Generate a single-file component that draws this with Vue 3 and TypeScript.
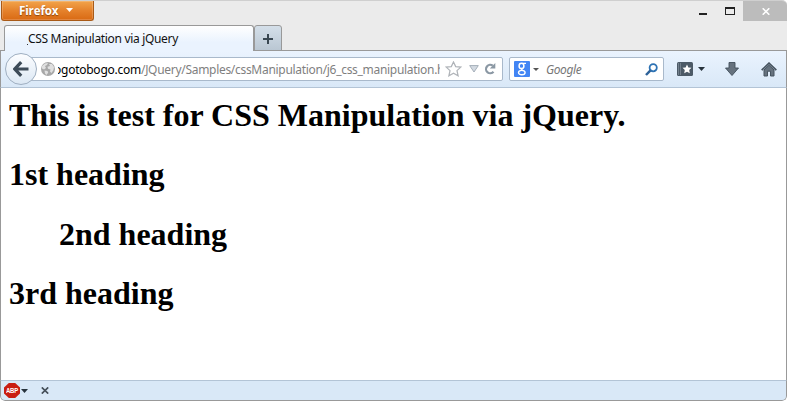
<script setup lang="ts">
interface Heading {
  text: string
  indented?: boolean
}

const headings: Heading[] = [
  { text: 'This is test for CSS Manipulation via jQuery.' },
  { text: '1st heading' },
  { text: '2nd heading', indented: true },
  { text: '3rd heading' },
]
</script>

<template>
  <div class="window">
    <header class="titlebar">
      <button class="app-button">
        <span>Firefox</span>
        <svg width="7" height="4" viewBox="0 0 7 4"><path d="M0 0H7L3.5 4Z" fill="#fff" /></svg>
      </button>
      <div class="controls">
        <svg class="minimize" width="8" height="3"><rect width="8" height="2" fill="#222" /></svg>
        <svg class="maximize" width="10" height="8" viewBox="0 0 10 8">
          <path d="M0 0H10V8H0ZM1 2V7H9V2Z" fill="#222" fill-rule="evenodd" />
        </svg>
        <div class="close">
          <svg width="8" height="7" viewBox="0 0 8 7"><path d="M.7 .3L7.3 6.7M7.3 .3L.7 6.7" stroke="#fff" stroke-width="1.6" /></svg>
        </div>
      </div>
    </header>

    <div class="tabs">
      <div class="tab"><i class="speck"></i><span class="tab-title">CSS Manipulation via jQuery</span></div>
      <div class="new-tab">
        <svg width="10" height="10" viewBox="0 0 10 10"><path d="M4 0H6V4H10V6H6V10H4V6H0V4H4Z" fill="#394751" /></svg>
      </div>
    </div>

    <nav class="toolbar">
      <div class="back">
        <svg width="17" height="16" viewBox="0 0 17 16">
          <path d="M8.2 1.2L1.8 8L8.2 14.8M2.2 8H15.5" fill="none" stroke="#3d4b58" stroke-width="3.2" />
        </svg>
      </div>
      <div class="address">
        <svg class="globe" width="14" height="14" viewBox="0 0 14 14">
          <circle cx="7" cy="7" r="7" fill="#a8a8a8" />
          <path d="M1 4L4 1.5L7 1L6 3L4 4L5 6L3 7.5L1 6.5ZM8 2L11 2L13 5L12.5 8L10.5 11L9 9.5L9.5 7.5L7 6.8L6.5 4.7L9 4ZM3.5 8.5L6.5 9L7.2 10.5L5.5 13L4 11.5Z" fill="#e0e0e0" />
        </svg>
        <div class="url">
          <span class="domain">ogotobogo.com</span><span class="path">/JQuery/Samples/cssManipulation/j6_css_manipulation.html</span>
        </div>
        <svg class="star" width="17" height="16" viewBox="0 0 17 16">
          <path d="M8.5 1L10.7 5.6L15.8 6.1L12 9.6L13.1 14.8L8.5 12.2L3.9 14.8L5 9.6L1.2 6.1L6.3 5.6Z" fill="#fff" stroke="#b0b4b9" stroke-width="1.25" />
        </svg>
        <svg class="dropmarker" width="10" height="8" viewBox="0 0 10 8"><path d="M.7 .6H9.3L5 7Z" fill="#d3dae2" stroke="#a5afb9" /></svg>
        <svg class="reload" width="12" height="12" viewBox="0 0 12 12">
          <path d="M8.8 2.7A4.2 4.2 0 1 0 9.5 8.7" fill="none" stroke="#8b98a4" stroke-width="2.2" />
          <path d="M11.3 0V5.5H5.8Z" fill="#8b98a4" />
        </svg>
      </div>
      <div class="search">
        <svg class="google" width="16" height="16" viewBox="0 0 16 16">
          <rect width="16" height="16" rx="1" fill="#4285f4" />
          <g fill="none" stroke="#fff">
            <ellipse cx="7.5" cy="4.9" rx="2.4" ry="2.6" stroke-width="1.5" />
            <path d="M8.5 2.3H12M8.4 7.3C7.2 8.2 7.5 8.7 8.6 9.3" stroke-width="1.3" />
            <ellipse cx="7.8" cy="11.6" rx="3.3" ry="2.2" stroke-width="1.4" />
          </g>
        </svg>
        <svg class="engine-arrow" width="6" height="3"><path d="M0 0H6L3 3Z" fill="#555" /></svg>
        <span class="placeholder">Google</span>
        <svg class="magnifier" width="13" height="13" viewBox="0 0 13 13">
          <circle cx="8.2" cy="4.7" r="3.6" fill="none" stroke="#2e73b4" stroke-width="1.8" />
          <path d="M5.5 7.4L1 12" stroke="#2e6299" stroke-width="2.5" />
        </svg>
      </div>
      <svg class="bookmarks" width="16" height="14" viewBox="0 0 16 14">
        <rect width="16" height="14" rx="1.5" fill="#4c5a67" />
        <path d="M1.5 1V13M3.5 1V13" stroke="#73808c" />
        <path d="M10 2.5L11.4 5.4L14.5 5.8L12.2 8L12.8 11.3L10 9.7L7.2 11.3L7.8 8L5.5 5.8L8.6 5.4Z" fill="#fff" />
      </svg>
      <svg class="bookmarks-arrow" width="7" height="4"><path d="M0 0H7L3.5 4Z" fill="#27323c" /></svg>
      <svg class="download" width="14" height="14" viewBox="0 0 14 14"><path d="M4 .5H10V6H13.5L7 13.5L.5 6H4Z" fill="#66727e" stroke="#414e5a" stroke-width=".9" /></svg>
      <svg class="home" width="16" height="15" viewBox="0 0 16 15">
        <path d="M3 8L8 3.2L13 8V14H9.5V9.2H6.5V14H3Z" fill="#66727e" stroke="#46535f" />
        <path d="M.7 8.2L8 1.2L15.3 8.2" fill="none" stroke="#46535f" stroke-width="1.8" />
      </svg>
    </nav>

    <main class="page">
      <h1 v-for="heading in headings" :key="heading.text" :class="{ indented: heading.indented }">{{ heading.text }}</h1>
    </main>

    <footer class="addon-bar">
      <div class="abp"><span>ABP</span></div>
      <svg class="abp-arrow" width="7" height="4"><path d="M0 0H7L3.5 4Z" fill="#27323c" /></svg>
      <svg class="bar-close" width="8" height="7" viewBox="0 0 8 7"><path d="M.8 .4L7.2 6.6M7.2 .4L.8 6.6" stroke="#46505a" stroke-width="1.7" /></svg>
    </footer>
  </div>
</template>

<style>
body {
  background: #fff;
  overflow: hidden;
}
</style>

<style scoped>
* {
  box-sizing: border-box;
}
svg {
  display: block;
  flex: none;
}
.window {
  width: 787px;
  height: 401px;
  display: flex;
  flex-direction: column;
  background: #ebebeb;
  border-top: 1px solid #cfcfcf;
  border-radius: 0 5px 5px 5px;
  overflow: hidden;
  font-family: "Noto Sans", "Open Sans", sans-serif;
  font-size: 12px;
}
.titlebar {
  height: 24px;
  flex: none;
  display: flex;
  justify-content: space-between;
  align-items: flex-start;
}
.app-button {
  width: 93px;
  height: 20px;
  margin-left: 1px;
  padding: 0 0 1px 17px;
  display: flex;
  align-items: center;
  gap: 8px;
  border: 1px solid #a95a17;
  border-top: 0;
  border-radius: 0 0 3px 3px;
  background: linear-gradient(#f2a44b, #e5822c 50%, #d96a13);
  box-shadow: inset 0 0 0 1px #ffffff30;
  color: #fff;
  font: bold 11.5px "Open Sans", sans-serif;
  letter-spacing: -0.1px;
  text-shadow: 0 1px 1px #8c460e;
}
.controls {
  display: flex;
}
.minimize {
  margin: 12px 18px 0 0;
}
.maximize {
  margin: 6px 8px 0 0;
}
.close {
  width: 44px;
  height: 20px;
  padding: 7px 0 0 19px;
  background: #bcbcbc;
}
.tabs {
  height: 26px;
  flex: none;
  display: flex;
  padding-left: 4px;
  box-shadow: inset 0 -1px #999;
}
.tab {
  width: 250px;
  height: 26px;
  padding: 0 0 0 22px;
  display: flex;
  align-items: center;
  border: 1px solid #999;
  border-bottom: 0;
  border-radius: 3px 3px 0 0;
  background: linear-gradient(#fff, #eaf3fe 65%);
}
.speck {
  width: 1px;
  height: 1px;
  margin-top: 12px;
  background: #333;
}
.tab-title {
  color: #111;
  letter-spacing: -0.32px;
  white-space: nowrap;
}
.new-tab {
  width: 28px;
  height: 26px;
  padding: 8px 0 0 8px;
  border: 1px solid #999;
  border-radius: 3px 3px 0 0;
  background: linear-gradient(#d4dfe9, #bac7d3);
}
.toolbar {
  height: 37px;
  flex: none;
  display: flex;
  align-items: center;
  padding-left: 4px;
  border: solid #999;
  border-width: 0 1px 0;
  border-bottom: 1px solid #b3c4d6;
  background: linear-gradient(#eaf3fe, #d9e8f7);
}
.back {
  position: relative;
  width: 32px;
  height: 32px;
  flex: none;
  display: grid;
  place-items: center;
  border: 1px solid #9fafc1;
  border-radius: 50%;
  background: linear-gradient(#fcfdff, #dce8f4);
}
.address,
.search {
  height: 24px;
  display: flex;
  align-items: center;
  border: 1px solid #a9b9cb;
  border-radius: 2px;
  background: #fff;
}
.address {
  width: 474px;
  margin-left: -8px;
  padding-left: 11px;
}
.url {
  width: 382px;
  height: 22px;
  margin-left: 3px;
  display: flex;
  line-height: 23px;
  white-space: nowrap;
  overflow: hidden;
}
.domain {
  margin-left: -4px;
  color: #000;
  letter-spacing: -0.25px;
}
.path {
  color: #7f7f7f;
  letter-spacing: -0.3px;
}
.star {
  margin-left: 5px;
}
.dropmarker {
  margin-left: 7px;
}
.reload {
  margin-left: 5px;
}
.search {
  width: 155px;
  margin-left: 6px;
  padding-left: 4px;
}
.engine-arrow {
  margin-left: 3px;
}
.placeholder {
  width: 106px;
  padding-left: 7px;
  color: #777;
  font-style: italic;
  letter-spacing: -0.4px;
}
.bookmarks {
  margin-left: 13px;
}
.bookmarks-arrow {
  margin-left: 5px;
}
.download {
  margin-left: 20px;
}
.home {
  margin-left: 22px;
}
.page {
  flex: 1;
  padding: 8px 8px 0;
  border: solid #999;
  border-width: 0 1px;
  background: #fff;
  overflow: hidden;
}
h1 {
  margin: 0 0 21.44px;
  color: #000;
  font: bold 32px/38px "Liberation Serif", serif;
  white-space: nowrap;
}
h1.indented {
  padding-left: 50px;
}
.addon-bar {
  height: 21px;
  flex: none;
  display: flex;
  align-items: center;
  padding-left: 3px;
  border: 1px solid #999;
  border-top-color: #b3c4d6;
  border-radius: 0 0 5px 5px;
  background: #d9e8f7;
}
.abp {
  width: 16px;
  height: 15px;
  display: flex;
  align-items: center;
  justify-content: center;
  background: #c91d12;
  clip-path: polygon(30% 0, 70% 0, 100% 30%, 100% 70%, 70% 100%, 30% 100%, 0 70%, 0 30%);
}
.abp span {
  color: #fff;
  font: bold 8px/9px "Liberation Sans", sans-serif;
  letter-spacing: -0.3px;
  transform: scaleX(0.75);
}
.abp-arrow {
  margin-left: 1px;
}
.bar-close {
  margin-left: 13px;
}
</style>
